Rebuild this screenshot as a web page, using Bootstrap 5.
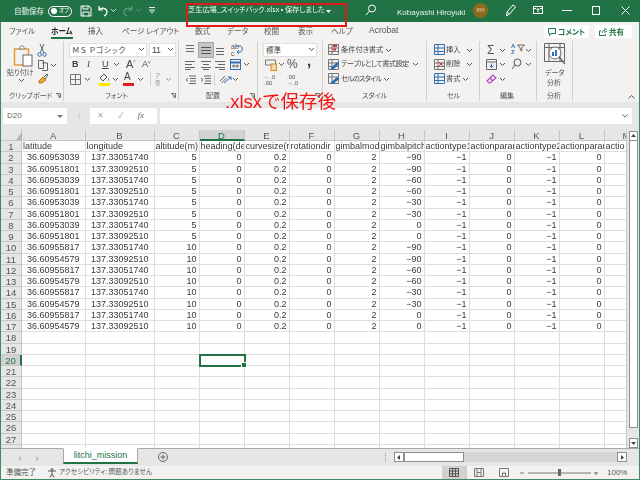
<!DOCTYPE html>
<html lang="ja"><head><meta charset="utf-8"><title>Excel</title>
<link href="https://cdn.jsdelivr.net/npm/bootstrap@5.3.0/dist/css/bootstrap.min.css" rel="stylesheet">
<style>
html,body{margin:0;width:640px;height:480px;overflow:hidden;background:#f3f2f1}
body{font-family:"Liberation Sans","Noto Sans CJK JP",sans-serif;color:#444;position:relative}
svg{display:block;flex:none}
.jp{font-family:"Noto Sans CJK JP","Liberation Sans",sans-serif;font-feature-settings:"palt";line-height:1}
.win{width:640px;height:480px;border:solid #3f8a63;border-width:0 1px 1px 1px;filter:blur(.3px)}
.tbar{height:22px;background:#217346;color:#eef5f0;margin:0 -1px;font-size:7.5px}
.auto{margin-left:14px;width:34px}
.tog{width:24px;height:11px;border:1px solid #fff;border-radius:6px;gap:2px;padding-left:2px;font-size:5.5px}
.tog i{width:6px;height:6px;border-radius:50%;background:#fff;display:block}
.ttl{position:absolute;left:188px;top:6px;font-size:7.2px;white-space:nowrap;color:#f4f9f6}
.usr{position:absolute;left:397px;top:7px;font-size:8px;white-space:nowrap;font-family:"Liberation Sans",sans-serif;color:#e8f2ec}
.ava{position:absolute;left:473px;top:3px;width:15px;height:15px;border-radius:50%;background:#8c6a1e;font-size:5.5px;color:#e8dcc0;line-height:15px;text-align:center}
.ti{position:absolute;top:5px}
.tabs{height:18px;font-size:7.6px;color:#555;position:relative}
.tabs span{position:absolute;top:5px;white-space:nowrap}
.tabs .on{color:#222;font-weight:700}
.tabs .ul{position:absolute;left:50px;top:15px;width:22px;height:2px;background:#217346}
.tabs .acro{font-family:"Liberation Sans",sans-serif;font-size:8.5px;top:4px}
.cbtn{position:absolute;top:3px;height:13px;background:#fff;font-size:7.5px;color:#217346;font-weight:700;gap:2px;padding-left:4px}
.rib{height:62px;margin:0;color:#444}
.grp{height:60px;border-right:1px solid #d2d0ce;position:relative;flex:none;margin-top:1px}
.lab{position:absolute;bottom:2px;font-size:7px;color:#555;white-space:nowrap}
.lau{position:absolute;right:2px;bottom:3px}
.rw{position:absolute;display:flex;align-items:center;height:13px}
.ddn{background:#fff;height:14px;border:1px solid #e1dfdd;font-size:7.5px;padding:0 2px;color:#444}
.fnt{letter-spacing:.9px}
.hl{background:#c8c6c4;outline:1px solid #a8a6a4}
.t7{font-size:7.2px;white-space:nowrap;color:#444}
.t7.n1{letter-spacing:-.55px}
.t7.n2{letter-spacing:-.85px}
.gap6{height:6px;background:#e6e6e6;margin:0}
.fbar{height:22px;background:#e6e6e6;padding:0 7px 6px 2px;gap:3px}
.nm{width:64px;height:16px;background:#fff;font-size:8px;padding:0 4px;color:#666}
.dts{width:17px;height:16px;color:#999;font-size:6px;line-height:4px}
.fx{width:67px;height:16px;background:#fff;color:#aaa;padding-left:7px;gap:14px;font-size:8px}
.fx i{font-family:"Liberation Serif",serif;font-size:9px;color:#666}
.fin{height:16px;background:#fff;flex:1}
.sht{height:318px;background:#fff;position:relative;overflow:hidden}
.rwh{height:11.25px;font-size:9px;line-height:11px;color:#3a3a3a}
.c{flex:none;height:100%;border-right:1px solid #dedede;border-bottom:1px solid #dedede;padding:0 2px;white-space:nowrap;overflow:hidden;text-align:right}
.c.tx{text-align:left;padding:0 1px}
.c.wd{padding-right:5px}
.h{background:#e6e6e6;color:#555;text-align:center;border-color:#c6c6c6;padding:0;font-size:9.5px}
.h.act{background:#d2d2d2;color:#217346;border-bottom:2px solid #217346}
.h.acr{background:#d2d2d2;color:#217346;border-right:2px solid #217346}
.w0{width:21px}.w1{width:63.5px}.w2{width:69px}.w3{width:45px}
.hd{height:11px}
.sel{position:absolute;left:198px;top:224px;width:47px;height:13px;border:2px solid #217346}
.sel i{position:absolute;right:-3px;bottom:-3px;width:4px;height:4px;background:#217346;border:1px solid #fff;box-sizing:content-box}
.vsb{position:absolute;right:0;top:0;width:13px;height:318px;background:#e6e6e6;border-left:1px solid #c6c6c6}
.sbb{position:absolute;left:2px;width:9px;background:#fff;border:1px solid #8e8e8e}
.tri{position:absolute;left:15px;top:2px}
.stb{height:18px;background:#e6e6e6;position:relative;border-top:1px solid #a8a8a8}
.shtab{position:absolute;left:62px;top:-1px;width:75px;height:16px;background:#fff;border:1px solid #a8a8a8;border-top-color:#fff;border-bottom:2px solid #217346;color:#217346;font-size:9px;text-align:center;line-height:13px}
.hsb{position:absolute;left:401px;top:3px;width:224px;height:10px;background:#d6d6d6}
.hb{position:absolute;top:3px;height:10px;background:#fff;border:1px solid #8e8e8e}
.sta{height:13px;background:#f3f2f1;font-size:6.6px;position:relative;color:#555}
.sta .p{position:absolute;top:2px;white-space:nowrap}
.sta .rdy{font-size:7.5px;left:5px}
.sta .pct{left:606px;font-family:"Liberation Sans",sans-serif;font-size:8px;top:1px;line-height:11px}
.nv{position:absolute;left:441px;top:0;width:25px;height:13px;background:#d2d0ce}
.ann{position:absolute;left:225px;top:88px;font-size:18.5px;color:#f01414;white-space:nowrap;line-height:24px;z-index:5;font-family:"Noto Sans CJK JP",sans-serif}
.ann b{font-family:"Liberation Sans",sans-serif;font-weight:400}
.box{position:absolute;left:186px;top:3px;width:161px;height:24px;border:2px solid #e01a1a;z-index:5}
</style></head>
<body>
<div class="win">
 <div class="tbar d-flex align-items-center position-relative">
  <span class="jp auto">自動保存</span>
  <span class="tog d-flex align-items-center jp"><i></i>オフ</span>
  <svg class="ti" style="left:80px" width="12" height="12" viewBox="0 0 12 12" fill="none" stroke="#fff"><path d="M1 1h8l2 2v8H1zM3 1v3h5V1M3 11V7h6v4"/></svg>
  <svg class="ti" style="left:97px" width="12" height="12" viewBox="0 0 12 12" fill="none" stroke="#fff" stroke-width="1.2"><path d="M2 1v4h4M2 5c2-3 8-2 8 2 0 2-1 3-3 4"/></svg>
  <svg class="ti" style="left:111px;top:9px" width="5" height="4" viewBox="0 0 5 4" fill="none" stroke="#d5e6dc"><path d="M0 0l2.500 2.500L5 0"/></svg>
  <svg class="ti" style="left:122px" width="12" height="12" viewBox="0 0 12 12" fill="none" stroke="#5d9c7b" stroke-width="1.200"><path d="M10 1v4H6M10 5C8 2 2 3 2 7c0 2 1 3 3 4"/></svg>
  <svg class="ti" style="left:136px;top:9px" width="5" height="4" viewBox="0 0 5 4" fill="none" stroke="#5d9c7b"><path d="M0 0l2.500 2.500L5 0"/></svg>
  <svg class="ti" style="left:149px;top:7px" width="6" height="7" viewBox="0 0 6 7" fill="none" stroke="#e4efe8"><path d="M0 .5h6M.500 3l2.500 3 2.500-3z"/></svg>
  <span class="ttl jp">芝生広場_スイッチバック.xlsx • 保存しました</span>
  <svg class="ti" style="left:326px;top:10px" width="5" height="3" viewBox="0 0 5 3"><path d="M0 0h5L2.500 3z" fill="#fff"/></svg>
  <svg class="ti" style="left:365px;top:4px" width="11" height="12" viewBox="0 0 11 12" fill="none" stroke="#fff"><circle cx="7" cy="4.500" r="3.500"/><path d="M4.500 7L1 11"/></svg>
  <span class="usr">Kobayashi Hiroyuki</span><span class="ava">KH</span>
  <svg class="ti" style="left:505px;top:4px" width="11" height="13" viewBox="0 0 11 13" fill="none" stroke="#fff"><path d="M2 8L8 1l2.500 2-6 7-3 2zM2 8l2.500 2"/></svg>
  <svg class="ti" style="left:533px" width="10" height="10" viewBox="0 0 10 10" fill="none" stroke="#fff"><rect x=".5" y="1.500" width="9" height="7"/><path d="M.5 3.500h2.500M7 3.500h2.500M5 7.500V3.500M3.500 5L5 3.500 6.500 5"/></svg>
  <svg class="ti" style="left:562px;top:10px" width="10" height="1"><rect width="10" height="1" fill="#fff"/></svg>
  <svg class="ti" style="left:592px;top:6px" width="8" height="9" fill="none" stroke="#fff"><rect x=".5" y=".5" width="7" height="8"/></svg>
  <svg class="ti" style="left:621px;top:6px" width="9" height="9" fill="none" stroke="#fff"><path d="M.5.500l8 8M8.500.500l-8 8"/></svg>
 </div>

 <div class="tabs jp">
  <span style="left:8px">ファイル</span><span class="on" style="left:50px">ホーム</span><span style="left:87px">挿入</span><span style="left:121px">ページ レイアウト</span><span style="left:194px">数式</span><span style="left:226px">データ</span><span style="left:263px">校閲</span><span style="left:297px">表示</span><span style="left:330px">ヘルプ</span><span class="acro" style="left:368px">Acrobat</span>
  <i class="ul"></i>
  <div class="cbtn d-flex align-items-center" style="left:543px;width:45px"><svg width="8" height="8" viewBox="0 0 8 8" fill="none" stroke="#217346"><path d="M.5.500h7v5H3L1.500 7.500v-2h-1z"/></svg>コメント</div>
  <div class="cbtn d-flex align-items-center" style="left:594px;width:37px"><svg width="8" height="8" viewBox="0 0 8 8" fill="none" stroke="#217346"><path d="M2 3H.5v4.500h6V6M3 5c0-2 2-3 3-3V.500l2 2-2 2V3"/></svg>共有</div>
 </div>

 <div class="rib d-flex">
  <!-- clipboard -->
  <div class="grp" style="width:63px">
   <svg class="position-absolute" style="left:12px;top:3px" width="20" height="24" viewBox="0 0 20 24" fill="none"><path d="M1.500 5h14v16h-14z" stroke="#e29a3c" stroke-width="1.500"/><path d="M6 5l2-3 2 0 2 3z" fill="#fff" stroke="#888"/><rect x="10" y="11" width="9" height="11" fill="#fff" stroke="#666"/></svg>
   <span class="lab jp" style="left:6px;top:28px">貼り付け</span>
   <svg class="position-absolute" style="left:18px;top:38px" width="5" height="4" viewBox="0 0 5 4" fill="none" stroke="#555"><path d="M0 0l2.500 2.500L5 0"/></svg>
   <svg class="position-absolute" style="left:36px;top:3px" width="10" height="13" viewBox="0 0 10 13" fill="none" stroke="#4a6a8a"><path d="M3 0l4 9M7 0L3 9"/><circle cx="2.500" cy="10.500" r="1.800" stroke="#2f6fb2"/><circle cx="7.500" cy="10.500" r="1.800" stroke="#2f6fb2"/></svg>
   <svg class="position-absolute" style="left:37px;top:19px" width="10" height="11" viewBox="0 0 10 11" fill="none" stroke="#666"><path d="M.5.500h5v8h-5zM4 3h5.500v7.500H4"/></svg>
   <svg class="position-absolute" style="left:50px;top:23px" width="5" height="4" viewBox="0 0 5 4" fill="none" stroke="#555"><path d="M0 0l2.500 2.500L5 0"/></svg>
   <svg class="position-absolute" style="left:37px;top:32px" width="11" height="11" viewBox="0 0 11 11" fill="none"><path d="M1 8l4-4 3 3-4 3-3 0z" fill="#e8a33d" stroke="#b97a1d"/><path d="M6 4l3-3 1 1-3 4" stroke="#555"/></svg>
   <span class="lab jp" style="left:8px">クリップボード</span>
   <svg class="lau" width="5" height="5" viewBox="0 0 5 5" fill="none" stroke="#777"><path d="M0 .5h4.500V5M1 1l3 3M2 4h2V2"/></svg>
  </div>
  <!-- font -->
  <div class="grp" style="width:115px">
   <div class="ddn d-flex align-items-center justify-content-between position-absolute jp" style="left:5px;top:2px;width:78px"><span class="fnt">ＭＳ Ｐゴシック</span><svg width="5" height="4" viewBox="0 0 5 4" fill="none" stroke="#555"><path d="M0 0l2.500 2.500L5 0"/></svg></div>
   <div class="ddn d-flex align-items-center justify-content-between position-absolute" style="left:85px;top:2px;width:27px;font-size:8.500px"><span>11</span><svg width="5" height="4" viewBox="0 0 5 4" fill="none" stroke="#555"><path d="M0 0l2.500 2.500L5 0"/></svg></div>
   <div class="rw" style="left:8px;top:17px;font-size:9px;color:#444">
    <b style="width:15px">B</b><i style="width:15px;font-family:'Liberation Serif'">I</i><u style="width:12px">U</u>
    <svg width="5" height="4" viewBox="0 0 5 4" fill="none" stroke="#555"><path d="M0 0l2.500 2.500L5 0"/></svg>
    <span style="width:15px;margin-left:7px;font-size:11px">A<sup style="font-size:5px;color:#2f6fb2;top:-4px">^</sup></span><span style="margin-left:1px;font-size:9px">A<sup style="font-size:5px;color:#2f6fb2;top:-3px">v</sup></span>
   </div>
   <svg class="position-absolute" style="left:6px;top:33px" width="11" height="11" viewBox="0 0 11 11" fill="none" stroke="#777"><path d="M.5.500h10v10H.500zM5.500.500v10M.500 5.500h10"/></svg>
   <svg class="position-absolute" style="left:21px;top:37px" width="5" height="4" viewBox="0 0 5 4" fill="none" stroke="#555"><path d="M0 0l2.500 2.500L5 0"/></svg>
   <svg class="position-absolute" style="left:35px;top:32px" width="11" height="13" viewBox="0 0 11 13"><path d="M5 1L1 5l3 3 4-4z" fill="none" stroke="#555"/><path d="M9 5l1 2-1 1z" fill="#555"/><rect y="10" width="11" height="3" fill="#ffe600"/></svg>
   <svg class="position-absolute" style="left:49px;top:37px" width="5" height="4" viewBox="0 0 5 4" fill="none" stroke="#555"><path d="M0 0l2.500 2.500L5 0"/></svg>
   <span class="position-absolute" style="left:60px;top:30px;font-size:10px;line-height:12px;color:#444">A</span><i class="position-absolute" style="left:59px;top:42px;width:11px;height:3px;background:#e81a1a"></i>
   <svg class="position-absolute" style="left:74px;top:37px" width="5" height="4" viewBox="0 0 5 4" fill="none" stroke="#555"><path d="M0 0l2.500 2.500L5 0"/></svg>
   <i class="position-absolute" style="left:86px;top:32px;width:1px;height:13px;background:#d2d0ce"></i>
   <span class="position-absolute jp" style="left:91px;top:32px;font-size:5.500px;color:#999;line-height:7px;text-align:center">ア<br>亜</span>
   <svg class="position-absolute" style="left:102px;top:37px" width="5" height="4" viewBox="0 0 5 4" fill="none" stroke="#999"><path d="M0 0l2.500 2.500L5 0"/></svg>
   <span class="lab jp" style="left:41px">フォント</span>
   <svg class="lau" width="5" height="5" viewBox="0 0 5 5" fill="none" stroke="#777"><path d="M0 .5h4.500V5M1 1l3 3M2 4h2V2"/></svg>
  </div>
  <!-- align -->
  <div class="grp" style="width:79px">
   <svg class="position-absolute" style="left:6px;top:4px" width="10" height="9" stroke="#666"><path d="M1 .5h8M1 3.500h8M1 6.500h8" fill="none"/></svg>
   <div class="hl position-absolute" style="left:20px;top:2px;width:14px;height:14px"></div>
   <svg class="position-absolute" style="left:22px;top:5px" width="10" height="9" stroke="#555"><path d="M0 1.500h10M0 4.500h10M0 7.500h10" fill="none"/></svg>
   <svg class="position-absolute" style="left:36px;top:6px" width="10" height="9" stroke="#666"><path d="M1 1.500h8M1 4.500h8M1 7.500h8" fill="none"/></svg>
   <span class="position-absolute" style="left:52px;top:2px;font-size:7px;line-height:7px;color:#555">ab<br>c</span>
   <svg class="position-absolute" style="left:56px;top:4px" width="8" height="12" viewBox="0 0 8 12" fill="none" stroke="#2f6fb2"><path d="M1 1h4c3 0 3 6 0 6H2M4 5L2 7l2 2"/></svg>
   <svg class="position-absolute" style="left:6px;top:20px" width="10" height="9" stroke="#666"><path d="M0 .5h10M0 3.500h7M0 6.500h10M0 8.500h6" fill="none"/></svg>
   <svg class="position-absolute" style="left:22px;top:20px" width="10" height="9" stroke="#666"><path d="M0 .5h10M2 3.500h6M0 6.500h10M2 8.500h6" fill="none"/></svg>
   <svg class="position-absolute" style="left:36px;top:20px" width="10" height="9" stroke="#666"><path d="M0 .5h10M3 3.500h7M0 6.500h10M4 8.500h6" fill="none"/></svg>
   <svg class="position-absolute" style="left:51px;top:18px" width="11" height="11" viewBox="0 0 11 11" fill="none" stroke="#2f6fb2"><rect x=".5" y=".5" width="10" height="10"/><path d="M.5 3.500h10" stroke="#2f6fb2" stroke-width="2"/><path d="M3 7h5M4 5.500L2.500 7 4 8.500M7 5.500L8.500 7 7 8.500" stroke="#555"/></svg>
   <svg class="position-absolute" style="left:65px;top:22px" width="5" height="4" viewBox="0 0 5 4" fill="none" stroke="#555"><path d="M0 0l2.500 2.500L5 0"/></svg>
   <svg class="position-absolute" style="left:6px;top:34px" width="11" height="10" viewBox="0 0 11 10" fill="none" stroke="#666"><path d="M4 1h7M5 3.500h6M5 6h6M4 8.500h7"/><path d="M3 3L1 4.800 3 6.500" stroke="#2f6fb2"/></svg>
   <svg class="position-absolute" style="left:21px;top:34px" width="11" height="10" viewBox="0 0 11 10" fill="none" stroke="#666"><path d="M4 1h7M5 3.500h6M5 6h6M4 8.500h7"/><path d="M1 3l2 1.800L1 6.500" stroke="#2f6fb2"/></svg>
   <i class="position-absolute" style="left:35px;top:32px;width:1px;height:13px;background:#d2d0ce"></i>
   <svg class="position-absolute" style="left:40px;top:32px" width="13" height="12" viewBox="0 0 13 12" fill="none" stroke="#666"><path d="M1 8l5-5M2.500 10l5-5"/><path d="M5 10l7-6M12 4v3M12 4H9" stroke="#2f6fb2"/></svg>
   <svg class="position-absolute" style="left:54px;top:37px" width="5" height="4" viewBox="0 0 5 4" fill="none" stroke="#555"><path d="M0 0l2.500 2.500L5 0"/></svg>
   <span class="lab jp" style="left:27px">配置</span>
   <svg class="lau" width="5" height="5" viewBox="0 0 5 5" fill="none" stroke="#777"><path d="M0 .5h4.500V5M1 1l3 3M2 4h2V2"/></svg>
  </div>
  <!-- number -->
  <div class="grp" style="width:65px">
   <div class="ddn d-flex align-items-center justify-content-between position-absolute jp" style="left:5px;top:2px;width:54px"><span>標準</span><svg width="5" height="4" viewBox="0 0 5 4" fill="none" stroke="#555"><path d="M0 0l2.500 2.500L5 0"/></svg></div>
   <svg class="position-absolute" style="left:7px;top:18px" width="12" height="12" viewBox="0 0 12 12" fill="none" stroke="#777"><path d="M.5 1h10v5H.500z"/><rect x="6" y="5" width="5.500" height="6.500" fill="#f2d8a8" stroke="#d58a1d"/></svg>
   <svg class="position-absolute" style="left:21px;top:22px" width="5" height="4" viewBox="0 0 5 4" fill="none" stroke="#555"><path d="M0 0l2.500 2.500L5 0"/></svg>
   <span class="position-absolute" style="left:29px;top:15px;font-size:12px;line-height:16px;color:#555">%</span>
   <b class="position-absolute" style="left:49px;top:12px;font-size:15px;line-height:16px;color:#333">,</b>
   <span class="position-absolute" style="left:6px;top:33px;font-size:6px;line-height:6px;color:#555"><span style="color:#2f6fb2">←</span>.0<br>.00</span>
   <span class="position-absolute" style="left:29px;top:33px;font-size:6px;line-height:6px;color:#555">.00<br><span style="color:#2f6fb2">→</span>.0</span>
   <svg class="lau" width="5" height="5" viewBox="0 0 5 5" fill="none" stroke="#777"><path d="M0 .5h4.500V5M1 1l3 3M2 4h2V2"/></svg>
  </div>
  <!-- styles -->
  <div class="grp" style="width:104px">
   <svg class="position-absolute" style="left:5px;top:3px" width="11" height="11" viewBox="0 0 11 11" fill="none" stroke="#777"><path d="M.5.500h10v10H.500zM.500 4h10M.500 7.500h10M4 .500v10"/><path d="M5 2h4M5 5.500h3" stroke="#d13438" stroke-width="2"/></svg>
   <span class="t7 jp position-absolute" style="left:18px;top:5px">条件付き書式</span>
   <svg class="position-absolute" style="left:63px;top:8px" width="5" height="4" viewBox="0 0 5 4" fill="none" stroke="#555"><path d="M0 0l2.500 2.500L5 0"/></svg>
   <svg class="position-absolute" style="left:5px;top:18px" width="11" height="11" viewBox="0 0 11 11" fill="none" stroke="#777"><path d="M.5.500h10v10H.500zM.500 4h10M.500 7.500h10M4 .500v10"/><path d="M3 10l6-6 1 1-6 6" stroke="#2f6fb2" stroke-width="1.500"/></svg>
   <span class="t7 n1 jp position-absolute" style="left:18px;top:19px">テーブルとして書式設定</span>
   <svg class="position-absolute" style="left:90px;top:22px" width="5" height="4" viewBox="0 0 5 4" fill="none" stroke="#555"><path d="M0 0l2.500 2.500L5 0"/></svg>
   <svg class="position-absolute" style="left:5px;top:32px" width="11" height="11" viewBox="0 0 11 11" fill="none" stroke="#777"><path d="M.5.500h10v10H.500zM.500 4h10M4 .500v10"/><path d="M3 10l6-5 1 1-6 5" stroke="#2f6fb2" stroke-width="1.500"/></svg>
   <span class="t7 n2 jp position-absolute" style="left:18px;top:34px">セルのスタイル</span>
   <svg class="position-absolute" style="left:61px;top:37px" width="5" height="4" viewBox="0 0 5 4" fill="none" stroke="#555"><path d="M0 0l2.500 2.500L5 0"/></svg>
   <span class="lab jp" style="left:39px">スタイル</span>
  </div>
  <!-- cells -->
  <div class="grp" style="width:53px">
   <svg class="position-absolute" style="left:7px;top:3px" width="11" height="11" viewBox="0 0 11 11" fill="none" stroke="#2f6fb2"><path d="M.5.500h10v10H.500zM.500 4h10M.500 7.500h10M4 .500v10"/></svg>
   <span class="t7 jp position-absolute" style="left:19px;top:5px">挿入</span>
   <svg class="position-absolute" style="left:40px;top:8px" width="5" height="4" viewBox="0 0 5 4" fill="none" stroke="#555"><path d="M0 0l2.500 2.500L5 0"/></svg>
   <svg class="position-absolute" style="left:7px;top:18px" width="11" height="11" viewBox="0 0 11 11" fill="none" stroke="#777"><path d="M.5.500h10v10H.500zM.500 4h10M.500 7.500h10M4 .500v10"/><path d="M5 3l4 4M9 3L5 7" stroke="#d13438"/></svg>
   <span class="t7 jp position-absolute" style="left:19px;top:19px">削除</span>
   <svg class="position-absolute" style="left:40px;top:22px" width="5" height="4" viewBox="0 0 5 4" fill="none" stroke="#555"><path d="M0 0l2.500 2.500L5 0"/></svg>
   <svg class="position-absolute" style="left:7px;top:32px" width="11" height="11" viewBox="0 0 11 11" fill="none" stroke="#2f6fb2"><path d="M.5.500h10v10H.500zM.500 4h10M.500 7.500h10M4 .500v10"/></svg>
   <span class="t7 jp position-absolute" style="left:19px;top:34px">書式</span>
   <svg class="position-absolute" style="left:36px;top:37px" width="5" height="4" viewBox="0 0 5 4" fill="none" stroke="#555"><path d="M0 0l2.500 2.500L5 0"/></svg>
   <span class="lab jp" style="left:20px">セル</span>
  </div>
  <!-- edit -->
  <div class="grp" style="width:57px">
   <span class="position-absolute" style="left:7px;top:2px;font-size:12px;line-height:14px;color:#555">Σ</span>
   <svg class="position-absolute" style="left:20px;top:8px" width="5" height="4" viewBox="0 0 5 4" fill="none" stroke="#555"><path d="M0 0l2.500 2.500L5 0"/></svg>
   <span class="position-absolute" style="left:31px;top:2px;font-size:6px;line-height:6px;color:#2f6fb2;font-weight:700">A<br>Z</span>
   <svg class="position-absolute" style="left:37px;top:3px" width="8" height="8" viewBox="0 0 8 8" fill="none" stroke="#666"><path d="M.5 1h7L4.800 4v3l-1.500-1V4z"/></svg>
   <svg class="position-absolute" style="left:46px;top:8px" width="5" height="4" viewBox="0 0 5 4" fill="none" stroke="#555"><path d="M0 0l2.500 2.500L5 0"/></svg>
   <svg class="position-absolute" style="left:6px;top:18px" width="11" height="11" viewBox="0 0 11 11" fill="none" stroke="#666"><path d="M.5.500h10v10H.500zM.500 3h10"/><path d="M5.500 4.500v4M3.500 6.500l2 2 2-2" stroke="#2f6fb2"/></svg>
   <svg class="position-absolute" style="left:20px;top:22px" width="5" height="4" viewBox="0 0 5 4" fill="none" stroke="#555"><path d="M0 0l2.500 2.500L5 0"/></svg>
   <svg class="position-absolute" style="left:31px;top:17px" width="11" height="12" viewBox="0 0 11 12" fill="none" stroke="#555"><circle cx="6.500" cy="4.500" r="3.500"/><path d="M4 7L1 11"/></svg>
   <svg class="position-absolute" style="left:46px;top:22px" width="5" height="4" viewBox="0 0 5 4" fill="none" stroke="#555"><path d="M0 0l2.500 2.500L5 0"/></svg>
   <svg class="position-absolute" style="left:6px;top:33px" width="11" height="10" viewBox="0 0 11 10" fill="none" stroke="#b146c2" stroke-width="1.200"><path d="M1 7l6-6 3 3-6 5H3z"/><path d="M4 4l3 3"/></svg>
   <svg class="position-absolute" style="left:20px;top:37px" width="5" height="4" viewBox="0 0 5 4" fill="none" stroke="#555"><path d="M0 0l2.500 2.500L5 0"/></svg>
   <span class="lab jp" style="left:20px">編集</span>
  </div>
  <!-- analysis -->
  <div class="grp" style="width:36px">
   <svg class="position-absolute" style="left:7px;top:2px" width="22" height="22" viewBox="0 0 22 22" fill="none" stroke="#666"><path d="M.5.500h20v18H.500zM.500 4.500h20M5 .500v18M16 .500v18"/><circle cx="11" cy="10" r="6" fill="#fff"/><path d="M9 13V9" stroke="#2f6fb2" stroke-width="2"/><path d="M12 13V7" stroke="#2f6fb2" stroke-width="2"/><path d="M15 14l6 7" stroke-width="1.500"/></svg>
   <span class="lab jp" style="left:8px;top:28px">データ</span>
   <span class="lab jp" style="left:10px;top:38px">分析</span>
   <span class="lab jp" style="left:10px">分析</span>
  </div>
  <svg class="position-absolute" style="left:627px;top:95px" width="7" height="4" viewBox="0 0 7 4" fill="none" stroke="#555"><path d="M.5 3.500L3.500.5l3 3"/></svg>
 </div>

 <div class="gap6"></div>
 <div class="fbar d-flex">
  <div class="nm d-flex align-items-center justify-content-between"><span>D20</span><svg width="6" height="3" viewBox="0 0 6 3"><path d="M0 0h6L3 3z" fill="#777"/></svg></div>
  <div class="dts d-flex align-items-center justify-content-center">⋮</div>
  <div class="fx d-flex align-items-center"><span>✕</span><span>✓</span><i>fx</i></div>
  <div class="fin d-flex align-items-center justify-content-end pe-1"><svg width="6" height="4" viewBox="0 0 6 4" fill="none" stroke="#666"><path d="M.5.500L3 3 5.500.500"/></svg></div>
 </div>

 <div class="sht" id="sheet">
  <svg class="tri" width="6" height="8" viewBox="0 0 6 8" style="z-index:2"><path d="M6 0v8H0z" fill="#b4b4b4"/></svg>
 </div>

 <div class="stb">
  <svg class="position-absolute" style="left:17px;top:7px" width="3" height="5"><path d="M3 0v5L0 2.500z" fill="#bbb"/></svg>
  <svg class="position-absolute" style="left:35px;top:7px" width="3" height="5"><path d="M0 0v5l3-2.500z" fill="#bbb"/></svg>
  <div class="shtab">litchi_mission</div>
  <svg class="position-absolute" style="left:157px;top:3px" width="10" height="10" viewBox="0 0 10 10" fill="none" stroke="#666"><circle cx="5" cy="5" r="4.500"/><path d="M5 2.500v5M2.500 5h5"/></svg>
  <i class="position-absolute" style="left:384px;top:4px;width:1px;height:9px;border-left:1px dotted #999"></i>
  <div class="hsb"></div>
  <div class="hb" style="left:393px;width:10px"><svg style="margin:2px 0 0 2px" width="3" height="5"><path d="M3 0v5L0 2.500z" fill="#444"/></svg></div>
  <div class="hb" style="left:403px;width:60px"></div>
  <div class="hb" style="left:616px;width:10px"><svg style="margin:2px 0 0 3px" width="3" height="5"><path d="M0 0v5l3-2.500z" fill="#444"/></svg></div>
 </div>
 <div class="sta jp">
  <span class="p rdy">準備完了</span>
  <svg class="position-absolute" style="left:46px;top:2px" width="11" height="10" viewBox="0 0 11 10" fill="none" stroke="#555"><circle cx="5" cy="1.500" r="1"/><path d="M1 3l8 0M5 3v3L3 9.500M5 6l2 3.500"/></svg>
  <span class="p" style="left:58px">アクセシビリティ: 問題ありません</span>
  <div class="nv"></div>
  <svg class="position-absolute" style="left:448px;top:2px" width="10" height="9" fill="none" stroke="#555"><path d="M.5.500h9v8h-9zM.500 3h9M.500 5.800h9M3.500.500v8M6.500.500v8"/></svg>
  <svg class="position-absolute" style="left:473px;top:2px" width="10" height="9" fill="none" stroke="#777"><path d="M.5.500h9v8h-9zM3 .500v8M7 .500v8M3 4.500h4"/></svg>
  <svg class="position-absolute" style="left:498px;top:2px" width="10" height="9" fill="none" stroke="#777"><path d="M.5 8.500V.5h9v8M3.500 5h3v3.500h-3zM.500 8.500h3M6.500 8.500h3"/></svg>
  <svg class="position-absolute" style="left:519px;top:6px" width="78" height="3"><path d="M0 1h4M8 1h63" stroke="#777" fill="none"/><path d="M74 1h4M76 0v3" stroke="#777" fill="none"/></svg>
  <i class="position-absolute" style="left:557px;top:3px;width:3px;height:7px;background:#666"></i>
  <span class="p pct">100%</span>
 </div>
</div>
<span class="ann"><b>.xlsx</b>で保存後</span>
<div class="box"></div>
<script src="https://cdn.jsdelivr.net/npm/bootstrap@5.3.0/dist/js/bootstrap.bundle.min.js"></script>
<script>
(function(){
 var sheet=document.getElementById('sheet');
 var w=['w1','w2','w3','w3','w3','w3','w3','w3','w3','w3','w3','w3','w3'];
 var L='ABCDEFGHIJKLM';
 var hd=['latitude','longitude','altitude(m)','heading(de','curvesize(r','rotationdir','gimbalmode','gimbalpitch','actiontype1','actionparar','actiontype2','actionparar','actio'];
 var pit=['−90','−90','−60','−60','−30','−30','0','0'];
 function row(cells,cls,hcls,hText){
  var r=document.createElement('div');r.className='d-flex '+cls;
  var h=document.createElement('div');h.className='c h w0'+(hcls||'');h.textContent=hText;r.appendChild(h);
  cells.forEach(function(t,i){var c=document.createElement('div');c.className='c '+w[i]+(t.tx?' tx':'')+(t.h?' h':'')+(t.act?' act':'')+(t.wd?' wd':'');c.textContent=t.v;r.appendChild(c)});
  sheet.appendChild(r);
 }
 row(L.split('').map(function(l,i){return{v:l,h:1,act:i==3}}),'hd rwh','','');
 for(var n=1;n<=28;n++){
  var cells;
  if(n==1){cells=hd.map(function(v){return{v:v,tx:1}})}
  else if(n<=17){
   var i=n-2,o=i%2==0;
   var lat=n<=9?(o?'36.60953039':'36.60951801'):(o?'36.60955817':'36.60954579');
   var vals=[lat,o?'137.33051740':'137.33092510',n<=9?'5':'10','0','0.2','0','2',pit[i%8],'−1','0','−1','0',''];
   cells=vals.map(function(v,k){return{v:v,wd:k<2}});
  } else cells=w.map(function(){return{v:''}});
  row(cells,'rwh',n==20?' acr':'',String(n));
 }
 var s=document.createElement('div');s.className='sel';s.innerHTML='<i></i>';sheet.appendChild(s);
 var v=document.createElement('div');v.className='vsb';
 v.innerHTML='<div class="sbb" style="top:1px;height:10px"><svg style="margin:2px 0 0 1px" width="5" height="3"><path d="M0 3h5L2.500 0z" fill="#444"/></svg></div><div class="sbb" style="top:10px;height:288px"></div><div class="sbb" style="top:308px;height:10px"><svg style="margin:3px 0 0 1px" width="5" height="3"><path d="M0 0h5L2.500 3z" fill="#444"/></svg></div>';
 sheet.appendChild(v);
})();
</script>
</body></html>
